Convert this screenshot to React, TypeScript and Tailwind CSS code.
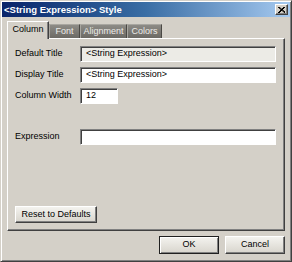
import React from 'react';

const font = { fontFamily: '"Liberation Sans", Arial, sans-serif' };

function Field({ label, value, width, readOnly }: { label: string; value: string; width?: string; readOnly?: boolean }) {
  return (
    <div className="flex items-center h-[16px]">
      <span className="w-[65px] text-[9px] text-black">{label}</span>
      <div
        className={`h-[16px] ${width ?? 'flex-1'} ${
          readOnly ? 'bg-[#ecebe6]' : 'bg-white'
        } border border-t-[#808080] border-l-[#808080] border-r-white border-b-white shadow-[inset_1px_1px_#404040] flex items-center pl-[5px] text-[9px] text-black`}
      >
        {value}
      </div>
    </div>
  );
}

function Button({ children, className = '', primary }: { children: React.ReactNode; className?: string; primary?: boolean }) {
  return (
    <button
      className={`flex items-center justify-center text-[9px] text-black bg-gradient-to-b from-[#f4f3ef] to-[#d8d5cd] border ${
        primary
          ? 'border-[#202020] shadow-[inset_1px_1px_#fff,inset_-1px_-1px_#808080]'
          : 'border-t-white border-l-white border-r-[#404040] border-b-[#404040] shadow-[inset_-1px_-1px_#808080]'
      } ${className}`}
    >
      {children}
    </button>
  );
}

export default function App() {
  return (
    <div
      style={font}
      className="w-[292px] h-[262px] bg-[#d4d0c8] border border-t-[#d4d0c8] border-l-[#d4d0c8] border-r-[#404040] border-b-[#404040] shadow-[inset_1px_1px_#fff,inset_-1px_-1px_#808080] p-[1px] flex flex-col"
    >
      {/* title bar */}
      <div className="h-[15px] flex items-center justify-between bg-gradient-to-r from-[#0a246a] via-[#3a6ea5] to-[#a6caf0] pl-[2px] pr-[2px]">
        <span className="text-[9.5px] font-bold text-white leading-none">&lt;String Expression&gt; Style</span>
        <div className="w-[13px] h-[11px] bg-[#d4d0c8] border border-t-white border-l-white border-r-[#404040] border-b-[#404040] shadow-[inset_-1px_-1px_#808080] flex items-center justify-center">
          <svg width="7" height="6" viewBox="0 0 7 6">
            <path d="M0 0 L7 6 M1 0 L7 5 M6 0 L0 6 M7 0 L1 6" stroke="#000" strokeWidth="1" />
          </svg>
        </div>
      </div>

      <div className="flex-1 flex flex-col px-[5px] pt-[4px]">
        {/* tabs */}
        <div className="flex items-end h-[17px]">
          <div className="relative z-10 h-[18px] -mb-[1px] w-[42px] bg-[#d4d0c8] border-t border-l border-r border-t-white border-l-white border-r-[#404040] shadow-[inset_-1px_0_#808080] flex items-center justify-center pb-[2px] text-[9px] text-black">
            Column
          </div>
          <div className="h-[14px] w-[31px] bg-gradient-to-b from-[#8d8b86] to-[#6c6a65] border-t border-l border-t-[#a8a6a0] border-l-[#a8a6a0] border-r border-r-[#4a4844] flex items-center justify-center text-[9px] text-[#ecebe8]">
            Font
          </div>
          <div className="h-[14px] w-[47px] bg-gradient-to-b from-[#8d8b86] to-[#6c6a65] border-t border-l border-t-[#a8a6a0] border-l-[#a8a6a0] border-r border-r-[#4a4844] flex items-center justify-center text-[9px] text-[#ecebe8]">
            Alignment
          </div>
          <div className="h-[14px] w-[35px] bg-gradient-to-b from-[#8d8b86] to-[#6c6a65] border-t border-l border-t-[#a8a6a0] border-l-[#a8a6a0] border-r border-r-[#4a4844] flex items-center justify-center text-[9px] text-[#ecebe8]">
            Colors
          </div>
        </div>

        {/* panel */}
        <div className="h-[193px] border border-t-white border-l-white border-r-[#404040] border-b-[#404040] shadow-[inset_-1px_-1px_#808080] flex flex-col pt-[7px] pl-[7px] pr-[8px] pb-[7px]">
          <div className="flex flex-col gap-[5px]">
            <Field label="Default Title" value="<String Expression>" readOnly />
            <Field label="Display Title" value="<String Expression>" />
            <Field label="Column Width" value="12" width="w-[38px]" />
          </div>
          <div className="mt-[25px]">
            <Field label="Expression" value="" />
          </div>
          <div className="mt-auto">
            <Button className="w-[82px] h-[17px]">Reset to Defaults</Button>
          </div>
        </div>

        {/* footer */}
        <div className="flex justify-end gap-[6px] pt-[5px]">
          <Button primary className="w-[60px] h-[18px]">OK</Button>
          <Button className="w-[60px] h-[18px]">Cancel</Button>
        </div>
      </div>
    </div>
  );
}
